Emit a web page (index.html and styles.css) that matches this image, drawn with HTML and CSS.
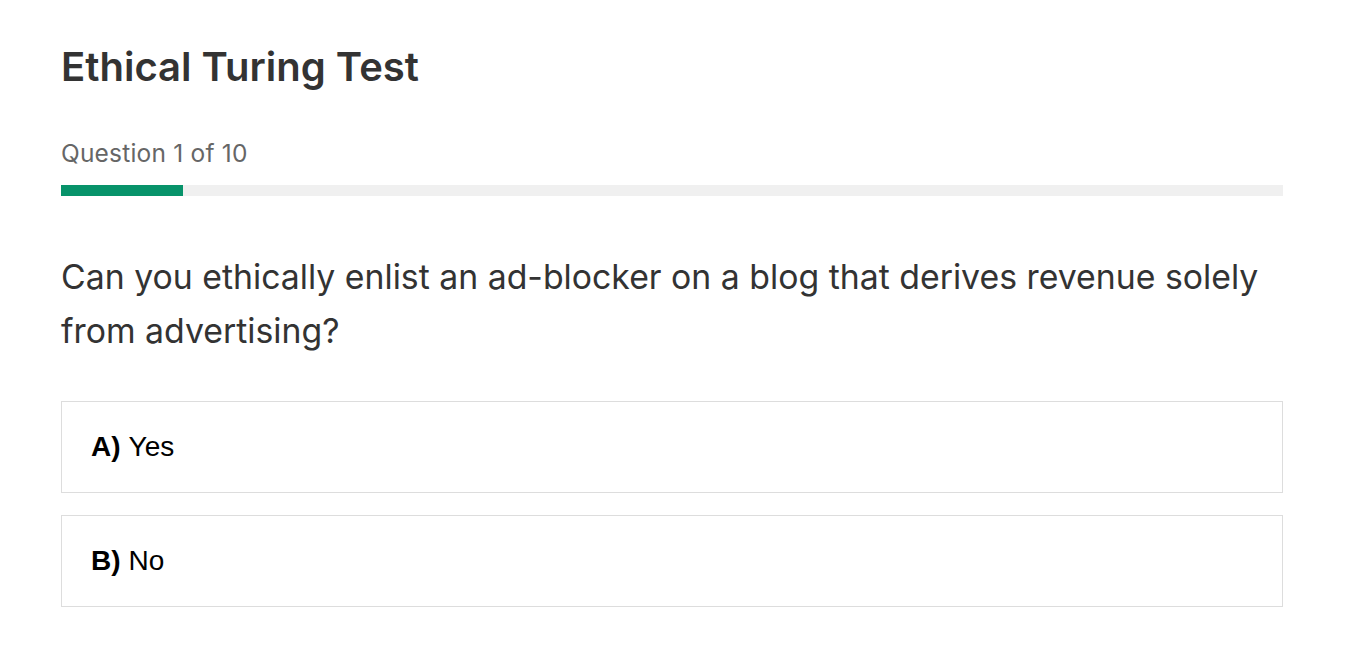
FILE: index.html
```html
<!DOCTYPE html>
<html lang="en">
<head>
<meta charset="utf-8">
<title>Ethical Turing Test</title>
<link rel="stylesheet" href="styles.css">
</head>
<body>
<main class="quiz">
  <h1 class="quiz-title">Ethical Turing Test</h1>
  <p class="quiz-progress-label">Question 1 of 10</p>
  <div class="progress"><div class="progress-fill" style="width: 10%"></div></div>
  <h2 class="question">Can you ethically enlist an ad-blocker on a blog that derives revenue solely from advertising?</h2>
  <div class="options">
    <div class="option"><strong>A)</strong> Yes</div>
    <div class="option"><strong>B)</strong> No</div>
  </div>
</main>
</body>
</html>
```
FILE: styles.css
```css
html, body {
  margin: 0;
  padding: 0;
  background: #fff;
}
body {
  font-family: Inter, "Noto Sans", sans-serif;
  color: #333;
}
.quiz {
  width: 1222px;
  margin-left: 61px;
  padding-top: 39px;
}
.quiz-title {
  margin: 0;
  font-size: 40px;
  font-weight: 600;
  line-height: 56px;
  color: #333;
}
.quiz-progress-label {
  margin: 43px 0 0;
  font-size: 24.5px;
  letter-spacing: 0.2px;
  line-height: 30px;
  color: #666;
}
.progress {
  margin-top: 17px;
  height: 11px;
  background: #f0f0f0;
}
.progress-fill {
  height: 100%;
  background: #07936a;
}
.question {
  margin: 54px 0 0;
  font-size: 33.8px;
  font-weight: 400;
  line-height: 54px;
  color: #333;
}
.options {
  margin-top: 43px;
  display: flex;
  flex-direction: column;
  gap: 22px;
}
.option {
  border: 1px solid #ddd;
  height: 92px;
  box-sizing: border-box;
  padding: 0 29px;
  display: flex;
  align-items: center;
  gap: 8px;
  font-family: "Liberation Sans", Arial, sans-serif;
  font-size: 28px;
  color: #000;
}
.option strong {
  font-weight: 700;
}
```
